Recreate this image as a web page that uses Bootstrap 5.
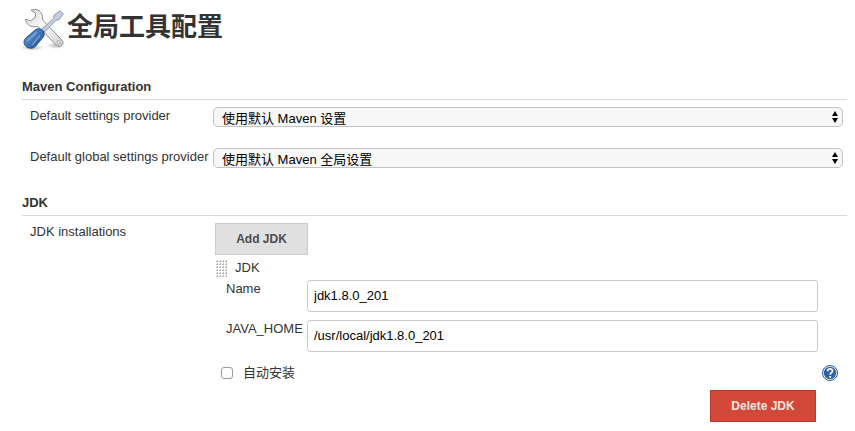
<!DOCTYPE html>
<html lang="zh-CN">
<head>
<meta charset="utf-8">
<meta name="viewport" content="width=device-width, initial-scale=1">
<title>全局工具配置</title>
<link href="https://cdn.jsdelivr.net/npm/bootstrap@5.3.0/dist/css/bootstrap.min.css" rel="stylesheet">
<style>
body{font-family:"Liberation Sans","Noto Sans CJK SC",sans-serif;font-size:13px;line-height:18px;color:#333;background:#fff;overflow:hidden}
.page{padding:0 8px 0 22px}
.page-title{height:78px;padding-top:7px}
.page-title h1{font-family:"Noto Sans CJK SC",sans-serif;font-size:26px;line-height:36px;font-weight:700;margin-left:2px;color:#333}
.tools-icon{width:44px;height:44px;margin-left:-1px;flex:none}
.section-head{font-size:13px;line-height:18px;font-weight:700;height:22px;border-bottom:1px solid #d9d9d9}
.jdk-section{padding-top:12px}
.setting-row{padding-left:8px;padding-right:4px;height:41px;padding-top:7px}
.setting-label{width:183px;flex:none;white-space:nowrap}
.setting-select{height:20px;font-size:13px;line-height:18px;padding:2px 24px 0 8px;border:1px solid #c3c3c3;border-radius:5px;color:#000;background-color:#f7f7f7;background-image:url("data:image/svg+xml,%3Csvg xmlns='http://www.w3.org/2000/svg' viewBox='0 0 6 12'%3E%3Cpath d='M3 0 6 5H0zM0 7H6L3 12z'/%3E%3C/svg%3E");background-size:6px 12px;background-position:right 4px center}
.jdk-body{padding-left:8px;padding-top:7px}
.action-btn{font-size:12px;font-weight:700;line-height:16px;height:32px;border-radius:0;padding:7px 0}
.add-btn{width:93px;background:#e0e0e0;border-color:#ccc;color:#4d4d4d;margin-left:2px}
.delete-btn{width:106px;background:#d24939;border-color:#bd3a2b;color:#f3e4e2}
.drag-row{height:25px;padding-top:4px;gap:7px}
.drag-grip{width:12px;height:18px;margin:1px 0 0 3px;flex:none}
.field-row{height:40px;padding-left:13px}
.field-label{width:81px;flex:none;white-space:nowrap}
.field-input{width:511px;height:32px;font-size:13px;line-height:18px;padding:5px 6px 6px;border:1px solid #ccc;border-radius:3px;color:#000}
.check-row{padding:4px 9px 8px 8px}
.auto-check.form-check-input{width:12px;height:12px;margin:0 10px 0 0;border:1px solid #9c9c9c;border-radius:3px}
.delete-row{padding-right:31px}
</style>
<script src="https://cdn.jsdelivr.net/npm/bootstrap@5.3.0/dist/js/bootstrap.bundle.min.js"></script>
</head>
<body>
<main class="page">
<header class="page-title d-flex align-items-start">
<svg class="tools-icon" viewBox="0 0 44 44" aria-hidden="true">
<defs>
<linearGradient id="steel" x1="0" y1="0" x2="1" y2="1"><stop offset="0" stop-color="#d5d7d4"/><stop offset=".45" stop-color="#fafafa"/><stop offset="1" stop-color="#cfd1ce"/></linearGradient>
<linearGradient id="grip" x1="0" y1="0" x2="1" y2="1"><stop offset="0" stop-color="#7ba6dc"/><stop offset=".5" stop-color="#3f76b9"/><stop offset="1" stop-color="#204a87"/></linearGradient>
<radialGradient id="shade"><stop offset="0" stop-color="#000" stop-opacity=".28"/><stop offset="1" stop-color="#000" stop-opacity="0"/></radialGradient>
</defs>
<ellipse cx="11" cy="40.500" rx="12" ry="3.500" fill="url(#shade)"/><ellipse cx="35" cy="38.500" rx="9" ry="3.500" fill="url(#shade)"/>
<path d="M10 3.200C14.500 1.200 19.500 3.200 21 7.500c.8 2.300.2 4.300.8 5.700L40.800 33c1.900 2.200 1.400 4.300-.1 5.500-1.700 1.400-4 .9-5.500-.6L17.500 20c-1.600-.9-4 .2-6.400-.4C7.200 18.600 4.500 15.500 4.500 12l5 2 4.800-3.500.2-4.300z" fill="url(#steel)" stroke="#8b8d89" stroke-linejoin="round"/>
<circle cx="37.600" cy="35.300" r="1.500" fill="#fff" stroke="#888a85" stroke-width=".8"/>
<path d="M20.500 22.500 32.500 11.500l.5-3.400 6-4.400 3.300 3.100-4 5.800-3.400.8L23.500 25z" fill="#c2cedd" stroke="#8494a9" stroke-width=".9" stroke-linejoin="round"/>
<path d="M14.500 22.600c2.300-1.300 5.500-.9 7.200.8 1.800 1.800 2 4.200.5 6.600L14.500 39.300c-2.500 2.700-7 2.500-9.600 0-2.400-2.300-2.500-5.500-.3-8z" fill="url(#grip)" stroke="#204a87"/>
<path d="m15 26-8 7.500M18.500 29l-7 8.300" fill="none" stroke="#a9c8ed" stroke-width="1.800" stroke-linecap="round" opacity=".45"/>
</svg>
<h1 class="mb-0">全局工具配置</h1>
</header>
<section>
<h2 class="section-head mb-0">Maven Configuration</h2>
<div class="setting-row d-flex align-items-start"><label class="setting-label" for="s1">Default settings provider</label><select id="s1" class="form-select setting-select"><option>使用默认 Maven 设置</option></select></div>
<div class="setting-row d-flex align-items-start"><label class="setting-label" for="s2">Default global settings provider</label><select id="s2" class="form-select setting-select"><option>使用默认 Maven 全局设置</option></select></div>
</section>
<section class="jdk-section">
<h2 class="section-head mb-0">JDK</h2>
<div class="jdk-body d-flex align-items-start">
<div class="setting-label">JDK installations</div>
<div class="flex-grow-1">
<button type="button" class="btn action-btn add-btn d-block">Add JDK</button>
<div class="drag-row d-flex align-items-start">
<svg class="drag-grip" viewBox="0 0 12 18" aria-hidden="true"><defs><pattern id="dots" width="3" height="3" patternUnits="userSpaceOnUse"><path d="M1 0h1v2H0V1h1z" fill="#b5b5b5"/></pattern></defs><path d="M0 0h12v18H0z" fill="url(#dots)"/></svg>
<span>JDK</span></div>
<div class="field-row d-flex align-items-start"><label class="field-label" for="n">Name</label><input id="n" class="form-control field-input" value="jdk1.8.0_201"></div>
<div class="field-row d-flex align-items-start"><label class="field-label" for="h">JAVA_HOME</label><input id="h" class="form-control field-input" value="/usr/local/jdk1.8.0_201"></div>
<div class="check-row d-flex align-items-center">
<input id="a" type="checkbox" class="form-check-input auto-check"><label for="a">自动安装</label>
<svg class="ms-auto" width="16" height="16" viewBox="0 0 16 16" role="img" aria-label="Help"><circle cx="8" cy="8" r="7.500" fill="#fff" stroke="#2d5791"/><circle cx="8" cy="8" r="6.200" fill="#2f61a5"/><path d="M5.600 6.200C5.600 3 10.700 3.200 10.500 6 10.400 7.700 8.200 7.700 8.200 9.700M8.200 11v1.700" fill="none" stroke="#fff" stroke-width="1.800"/></svg>
</div>
<div class="delete-row d-flex justify-content-end"><button type="button" class="btn action-btn delete-btn">Delete JDK</button></div>
</div>
</div>
</section>
</main>
</body>
</html>
